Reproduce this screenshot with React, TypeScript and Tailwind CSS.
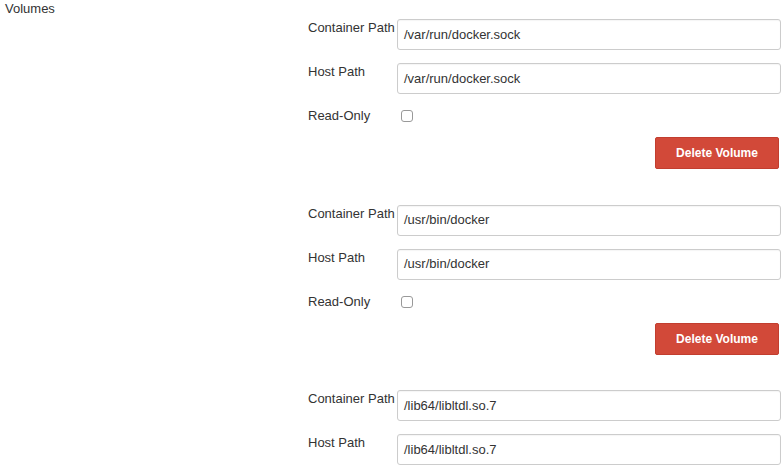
import React from "react";

const volumes = [
  { c: "/var/run/docker.sock", h: "/var/run/docker.sock" },
  { c: "/usr/bin/docker", h: "/usr/bin/docker" },
  { c: "/lib64/libltdl.so.7", h: "/lib64/libltdl.so.7" },
];

function Row({ label, value }: { label: string; value: string }) {
  return (
    <div className="flex items-start h-[44px]">
      <div className="w-[91px] pl-[2px] pt-[1px] leading-[16px] text-[13px] text-[#333]">{label}</div>
      <div className="flex-1 h-[31px] border border-[#ccc] rounded-[3px] bg-white flex items-center px-[6px] text-[13px] text-[#333] shadow-[inset_0_1px_1px_rgba(0,0,0,0.04)]">
        {value}
      </div>
    </div>
  );
}

export default function App() {
  return (
    <div className="w-[783px] h-[468px] overflow-hidden bg-white relative" style={{ fontFamily: '"Liberation Sans", Arial, sans-serif' }}>
      <div className="flex">
        <div className="w-[306px] pl-[5px] pt-[1px] text-[13px] leading-[16px] text-[#333]">Volumes</div>
        <div className="w-[475px] pt-[19px]">
          {volumes.map((v, i) => (
            <div key={i} className="h-[185.5px]">
              <Row label="Container Path" value={v.c} />
              <Row label="Host Path" value={v.h} />
              <div className="flex items-center h-[18px]">
                <div className="w-[91px] pl-[2px] text-[13px] leading-[16px] text-[#333]">Read-Only</div>
                <div className="ml-[4px] w-[12px] h-[12px] border border-[#999] rounded-[3px] bg-white" />
              </div>
              <div className="flex justify-end mt-[12px] pr-[2px]">
                <div className="w-[124px] h-[32px] bg-[#d24939] border border-[#c23e2f] rounded-[2px] text-white font-bold text-[12px] flex items-center justify-center">
                  Delete Volume
                </div>
              </div>
            </div>
          ))}
        </div>
      </div>
    </div>
  );
}
